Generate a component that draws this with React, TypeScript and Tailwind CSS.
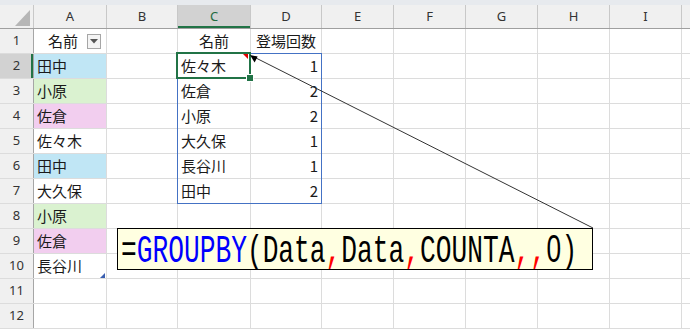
import React from 'react';

type Col = { key: string; w: string };

const COLS: Col[] = [
  { key: 'A', w: 'w-[73px]' },
  { key: 'B', w: 'w-[71px]' },
  { key: 'C', w: 'w-[73px]' },
  { key: 'D', w: 'w-[71px]' },
  { key: 'E', w: 'w-[72px]' },
  { key: 'F', w: 'w-[72px]' },
  { key: 'G', w: 'w-[72px]' },
  { key: 'H', w: 'w-[72px]' },
  { key: 'I', w: 'w-[72px]' },
];

const names = ['田中', '小原', '佐倉', '佐々木', '田中', '大久保', '小原', '佐倉', '長谷川'];

const fills: Record<string, string> = {
  田中: 'bg-[#c0e6f5]',
  小原: 'bg-[#daf2d0]',
  佐倉: 'bg-[#f2ceef]',
};

const counts: [string, number][] = [
  ['佐々木', 1],
  ['佐倉', 2],
  ['小原', 2],
  ['大久保', 1],
  ['長谷川', 1],
  ['田中', 2],
];

function FilterButton() {
  return (
    <span className="ml-[9px] w-[14px] h-[15px] border border-[#a6a6a6] bg-[#f4f4f4] flex items-center justify-center">
      <svg width="8" height="5" viewBox="0 0 8 5">
        <path d="M0 0h8L4 4.5z" fill="#555" />
      </svg>
    </span>
  );
}

function cellContent(col: string, row: number) {
  if (col === 'A') {
    if (row === 1)
      return (
        <div className="flex-1 flex items-center justify-end pr-[5px]">
          <span>名前</span>
          <FilterButton />
        </div>
      );
    if (row >= 2 && row <= 10) return <span className="pl-[3px]">{names[row - 2]}</span>;
  }
  if (col === 'C') {
    if (row === 1) return <span className="flex-1 text-center">名前</span>;
    if (row >= 2 && row <= 7) return <span className="pl-[3px]">{counts[row - 2][0]}</span>;
  }
  if (col === 'D') {
    if (row === 1) return <span className="flex-1 text-center">登場回数</span>;
    if (row >= 2 && row <= 7) return <span className="flex-1 text-right pr-[3px]">{counts[row - 2][1]}</span>;
  }
  return null;
}

function cellFill(col: string, row: number) {
  if (col === 'A' && row >= 2 && row <= 10) return fills[names[row - 2]] ?? 'bg-white';
  return 'bg-white';
}

function HeaderRow() {
  return (
    <div className="flex h-[24px] border-b border-[#9f9f9f] bg-[#f0f0f0] text-[13px] text-[#333] font-['Noto_Sans',sans-serif]">
      <div className="w-[34px] shrink-0 h-full border-r border-[#c8c8c8] flex items-end justify-end pr-[3px] pb-[2px]">
        <svg width="15" height="16" viewBox="0 0 15 16">
          <path d="M15 0V16H0z" fill="#b6b6b6" />
        </svg>
      </div>
      {COLS.map((c) => (
        <div
          key={c.key}
          className={`${c.w} shrink-0 h-full border-r border-[#c8c8c8] flex items-center justify-center ${
            c.key === 'C' ? 'bg-[#d2d2d2] text-[#1e6b40] shadow-[inset_0_-2px_0_#217346]' : ''
          }`}
        >
          {c.key}
        </div>
      ))}
      <div className="flex-1 h-full" />
    </div>
  );
}

function SheetRow({ row }: { row: number }) {
  const selected = row === 2;
  return (
    <div className="flex h-[25px] border-b border-[#dcdcdc]">
      <div
        className={`w-[34px] shrink-0 h-full border-r border-[#a6a6a6] flex items-center justify-center text-[13px] text-[#333] font-['Noto_Sans',sans-serif] ${
          selected ? 'bg-[#d2d2d2] shadow-[inset_-2px_0_0_#217346]' : 'bg-[#f0f0f0]'
        }`}
      >
        {row}
      </div>
      {COLS.map((c) => (
        <div
          key={c.key}
          className={`${c.w} shrink-0 h-full border-r border-[#dcdcdc] flex items-center text-[15px] text-[#1a1a1a] ${cellFill(c.key, row)}`}
        >
          {cellContent(c.key, row)}
        </div>
      ))}
      <div className="flex-1 h-full" />
    </div>
  );
}

// formula pieces, each with its colour (commas are red, function name blue)
const formula: [string, string][] = [
  ['=', 'text-black'],
  ['GROUPBY', 'text-[#0000ff]'],
  ['(Data', 'text-black'],
  [',', 'text-[#ff0000]'],
  ['Data', 'text-black'],
  [',', 'text-[#ff0000]'],
  ['COUNTA', 'text-black'],
  [',,', 'text-[#ff0000]'],
];

export default function App() {
  const rows = Array.from({ length: 12 }, (_, i) => i + 1);
  return (
    <div className="relative w-[690px] h-[330px] overflow-hidden bg-white font-['Noto_Sans_CJK_JP',sans-serif]">
      <div className="h-[5px] bg-[#e7eaee]" />
      <HeaderRow />
      {rows.map((r) => (
        <SheetRow key={r} row={r} />
      ))}

      {/* spill range */}
      <div className="absolute left-[177px] top-[53px] w-[145px] h-[151px] border border-[#4472c4] pointer-events-none" />

      {/* active cell */}
      <div className="absolute left-[176px] top-[52px] w-[75px] h-[27px] border-2 border-[#217346] pointer-events-none" />
      <div className="absolute left-[246px] top-[74px] w-[8px] h-[8px] bg-[#217346] border border-white" />

      {/* table resize handle */}
      <svg className="absolute left-[100px] top-[273px]" width="5" height="5" viewBox="0 0 5 5">
        <path d="M5 0V5H0z" fill="#3a5fb0" />
      </svg>

      {/* comment marker + arrow */}
      <svg className="absolute left-0 top-0 pointer-events-none" width="690" height="330" viewBox="0 0 690 330">
        <path d="M243 54h5v5z" fill="#e00000" />
        <line x1="593" y1="228" x2="254" y2="57" stroke="#333" strokeWidth="1" />
        <path d="M250 55 L257.6 56.6 L254.6 62.4 z" fill="#000" />
      </svg>

      {/* formula callout */}
      <div className="absolute left-[117px] top-[228px] w-[476px] h-[42px] border border-black bg-[#ffffe1] pl-[3px] pt-[1px] whitespace-nowrap">
        <span className="inline-block origin-left scale-x-[0.69] font-['Liberation_Mono',monospace] text-[38px] leading-[38px]">
          {formula.map(([t, c], i) => (
            <span key={i} className={c}>
              {t}
            </span>
          ))}
          <span className="inline-block w-[22.8px] text-center font-['Liberation_Sans',sans-serif]">0</span>
          <span>)</span>
        </span>
      </div>
    </div>
  );
}
